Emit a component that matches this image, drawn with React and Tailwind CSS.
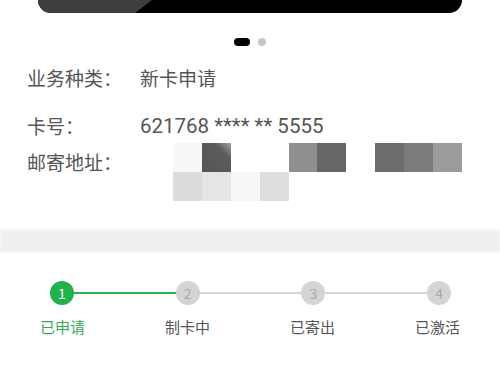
import React from 'react';

const mosaic = [
  ['#f8f8f8', 'linear-gradient(225deg,#a0a0a0 0%,#5b5b5b 30%,#555 100%)', '#fff', '#fff', '#8f8f8f', '#666666', '#fff', '#6d6d6d', '#7b7b7b', '#9c9c9c'],
  ['#dcdcdc', '#e5e5e5', '#f7f7f7', '#dedede', '#fff', '#fff', '#fff', '#fff', '#fff', '#fff'],
];

const steps = [
  { n: 1, label: '已申请', done: true },
  { n: 2, label: '制卡中' },
  { n: 3, label: '已寄出' },
  { n: 4, label: '已激活' },
];

const StepCircle = ({ step }) => (
  <div
    className={
      step.done
        ? 'w-6 h-6 shrink-0 rounded-full bg-[#22b14c] text-white flex items-center justify-center text-[14px] leading-none'
        : 'w-6 h-6 shrink-0 rounded-full bg-[#d4d4d4] text-[#ababab] flex items-center justify-center text-[14px] leading-none'
    }
  >
    {step.n}
  </div>
);

export default function App() {
  return (
    <div className="w-[500px] h-[380px] bg-white overflow-hidden font-['Noto_Sans_CJK_SC','Noto_Sans',sans-serif] text-[#555]">
      {/* card bottom edge */}
      <div className="mx-[38px] h-[13px] rounded-b-[13px] overflow-hidden bg-black">
        <svg width="428" height="13" viewBox="0 0 428 13" className="block">
          <polygon points="0,0 114,0 97,13 0,13" fill="#3e3e40" />
        </svg>
      </div>

      {/* pager dots */}
      <div className="mt-[25px] flex justify-center items-center gap-2">
        <div className="w-4 h-2 rounded-full bg-black" />
        <div className="w-2 h-2 rounded-full bg-[#c6c6c6]" />
      </div>

      {/* info rows */}
      <div className="px-[27px]">
        <div className="mt-[19px] flex text-[19px] leading-[26px]">
          <span className="w-[113px]">业务种类：</span>
          <span>新卡申请</span>
        </div>
        <div className="mt-[22px] flex text-[19px] leading-[26px]">
          <span className="w-[113px]">卡号：</span>
          <span className="font-['Roboto',sans-serif] text-[20.5px]">621768 **** ** 5555</span>
        </div>
        <div className="mt-[4px] flex items-start text-[19px] leading-[26px]">
          <span className="w-[113px] mt-[6px]">邮寄地址：</span>
          <div className="ml-[33px] grid grid-cols-[repeat(10,28.9px)] grid-rows-[29px_29px]">
            {mosaic.flat().map((c, i) => (
              <div key={i} style={{ background: c }} />
            ))}
          </div>
        </div>
      </div>

      {/* divider band */}
      <div className="mt-[29px] h-[22px] bg-[#efefef] blur-[1px]" />

      {/* progress stepper */}
      <div className="mt-[29px] pl-[50px] pr-[49px] flex items-center">
        <StepCircle step={steps[0]} />
        <div className="flex-1 h-[2px] bg-[#2db052]" />
        <StepCircle step={steps[1]} />
        <div className="flex-1 h-[2px] bg-[#d6d6d6]" />
        <StepCircle step={steps[2]} />
        <div className="flex-1 h-[2px] bg-[#d6d6d6]" />
        <StepCircle step={steps[3]} />
      </div>
      <div className="mt-3 grid grid-cols-4 text-[15px] leading-5 text-center">
        {steps.map(s => (
          <span key={s.n} className={s.done ? 'text-[#37a859]' : 'text-[#555]'}>
            {s.label}
          </span>
        ))}
      </div>
    </div>
  );
}
